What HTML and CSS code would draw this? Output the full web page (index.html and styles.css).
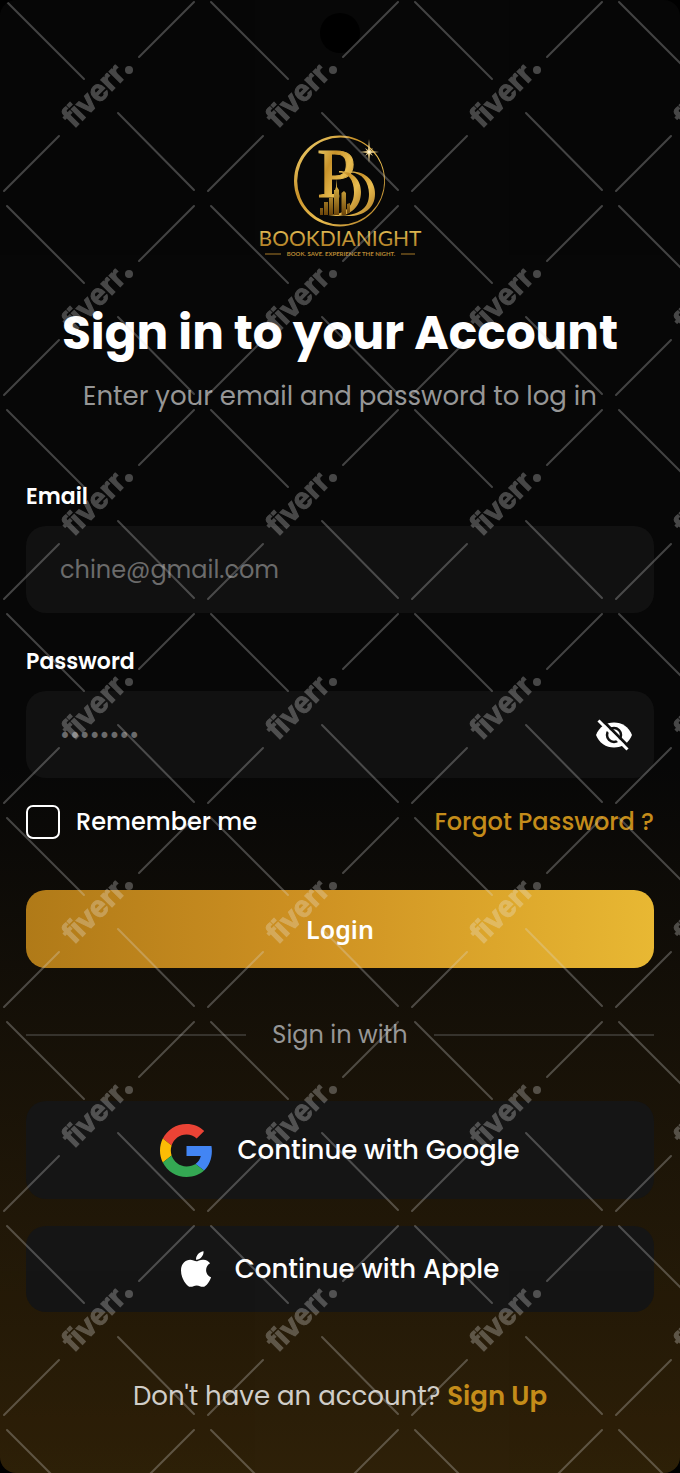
FILE: index.html
```html
<!DOCTYPE html>
<html lang="en">
<head>
    <meta charset="UTF-8">
    <meta name="viewport" content="width=device-width, initial-scale=1.0">
    <title>Bookdianight - Sign in</title>
    <link rel="stylesheet" href="styles.css">
</head>
<body>
    <main class="screen">
        <div class="camera"></div>

        <svg class="logo" viewBox="255 130 170 132" role="img" aria-label="Bookdianight">
            <defs>
                <linearGradient id="gold" x1="0" y1="0" x2="1" y2="1">
                    <stop offset="0" stop-color="#f7dc7c"/>
                    <stop offset="0.35" stop-color="#c8922a"/>
                    <stop offset="0.6" stop-color="#e9bd50"/>
                    <stop offset="1" stop-color="#a87420"/>
                </linearGradient>
                <linearGradient id="goldDown" x1="0" y1="0" x2="0" y2="1">
                    <stop offset="0" stop-color="#f0cd63"/>
                    <stop offset="1" stop-color="#a8741c"/>
                </linearGradient>
                <linearGradient id="tower" x1="0" y1="0" x2="0" y2="1">
                    <stop offset="0" stop-color="#f3c94f"/>
                    <stop offset="1" stop-color="#6b4409"/>
                </linearGradient>
            </defs>
            <!-- ring, thicker on the left -->
            <path fill="url(#gold)" fill-rule="evenodd" d="M294 181A45.500 45.500 0 1 1 385 181A45.500 45.500 0 1 1 294 181ZM297.200 181A43.500 43.500 0 1 0 384.200 181A43.500 43.500 0 1 0 297.200 181Z"/>
            <!-- monogram -->
            <text class="logo-letter" x="317" y="197">P</text>
            <path fill="url(#gold)" d="M339 171C353 171 361 180 361 192C361 206 351 216 336 216L328 215C346 215 354 205 354 192C354 180 348 172.500 339 172.500Z"/>
            <path fill="url(#gold)" d="M351 171.500C367 171.500 375 182 375 194C375 208 364 216 349 216H338C360 215.500 369 208 369 194C369 182 362 173 351 172.500Z"/>
            <!-- skyline -->
            <path fill="url(#tower)" d="M320 215V208H323V215ZM324 215V202H328V215ZM329 215V198L333 197V215ZM334 215V190H335L336 187L336.500 179L337 187L339 190V215ZM341.500 215V193L344 191L346 193V215ZM347 215V204L350 203V212L346 215Z"/>
            <!-- star -->
            <path fill="#e3c988" d="M369 139L370 150L373 148L371 151L379 152L371 153L373 156L370 154L369 163L368 154L365 156L367 153L360 152L367 151L365 148L368 150Z"/>
            <circle cx="369" cy="152" r="1.500" fill="#fff3cf"/>
            <text class="logo-name" x="340" y="246" text-anchor="middle">BOOKDIANIGHT</text>
            <text class="logo-tagline" x="341" y="256" text-anchor="middle">BOOK. SAVE. EXPERIENCE THE NIGHT.</text>
            <path stroke="#a87a28" stroke-width="1" d="M265 254H281M401 254H415"/>
        </svg>

        <h1 class="title">Sign in to your Account</h1>
        <p class="subtitle">Enter your email and password to log in</p>

        <form class="login-form">
            <div class="field">
                <label class="label" for="email">Email</label>
                <input class="input" id="email" type="email" placeholder="chine@gmail.com">
            </div>

            <div class="field">
                <label class="label" for="password">Password</label>
                <div class="password-box">
                    <input class="input" id="password" type="password" placeholder="••••••••">
                    <button class="eye-btn" type="button" aria-label="Show password">
                        <svg viewBox="0 0 40 36" width="40" height="36">
                            <path fill="#fff" d="M2 18C5 10 12 5.500 20 5.500S35 10 38 18C35 26 28 30.500 20 30.500S5 26 2 18Z"/>
                            <circle cx="20" cy="18" r="7" fill="none" stroke="#111" stroke-width="2.500"/>
                            <path stroke="#111" stroke-width="3" d="M6 1L36 31"/>
                            <path stroke="#fff" stroke-width="3" d="M4.500 3.500L33.500 32.500"/>
                        </svg>
                    </button>
                </div>
            </div>

            <div class="options">
                <label class="remember">
                    <input class="checkbox" type="checkbox">
                    Remember me
                </label>
                <a class="gold-link" href="#">Forgot Password ?</a>
            </div>

            <button class="login-btn" type="submit">Login</button>
        </form>

        <div class="divider">Sign in with</div>

        <div class="social">
            <button class="social-btn social-google" type="button">
                <svg viewBox="0 0 48 48" width="53" height="53">
                    <path fill="#EA4335" d="M24 9.500c3.540 0 6.710 1.220 9.210 3.600l6.850-6.850C35.900 2.380 30.470 0 24 0 14.620 0 6.510 5.380 2.560 13.220l7.980 6.190C12.430 13.720 17.740 9.500 24 9.500z"/>
                    <path fill="#4285F4" d="M46.980 24.550c0-1.570-.15-3.090-.38-4.550H24v9.020h12.940c-.58 2.960-2.260 5.480-4.780 7.180l7.730 6c4.510-4.180 7.090-10.360 7.090-17.650z"/>
                    <path fill="#FBBC05" d="M10.530 28.590c-.48-1.450-.76-2.990-.76-4.590s.27-3.140.76-4.590l-7.980-6.190C.92 16.460 0 20.120 0 24c0 3.880.92 7.540 2.560 10.780l7.970-6.190z"/>
                    <path fill="#34A853" d="M24 48c6.480 0 11.930-2.130 15.890-5.810l-7.730-6c-2.150 1.450-4.920 2.300-8.160 2.300-6.260 0-11.570-4.220-13.470-9.910l-7.980 6.190C6.510 42.620 14.620 48 24 48z"/>
                </svg>
                Continue with Google
            </button>
            <button class="social-btn" type="button">
                <svg viewBox="4 32 376 448" width="30" height="36">
                    <path fill="#fff" d="M318.700 268.700c-.2-36.700 16.400-64.400 50-84.800-18.800-26.900-47.200-41.700-84.700-44.600-35.500-2.800-74.300 20.700-88.500 20.700-15 0-49.400-19.700-76.400-19.700C63.300 141.200 4 184.800 4 273.500q0 39.300 14.400 81.200c12.800 36.700 59 126.700 107.200 125.200 25.200-.6 43-17.900 75.800-17.900 31.800 0 48.300 17.900 76.400 17.900 48.600-.7 90.400-82.500 102.600-119.300-65.200-30.700-61.700-90-61.700-91.900zm-56.600-164.200c27.300-32.400 24.800-61.900 24-72.500-24.100 1.400-52 16.400-67.900 34.900-17.500 19.800-27.800 44.300-25.600 71.900 26.100 2 49.900-11.400 69.500-34.300z"/>
                </svg>
                Continue with Apple
            </button>
        </div>

        <p class="signup">Don't have an account? <a class="gold-link" href="#">Sign Up</a></p>

        <svg class="watermark" width="100%" height="100%" aria-hidden="true">
            <defs>
                <pattern id="mark" width="204" height="204" patternUnits="userSpaceOnUse">
                    <path class="mark-line" d="M7 2L84 79M118 113L194 190M194 2L139 57M59 136L4 191"/>
                    <text class="mark-text" transform="translate(74 129) rotate(-45)">fiverr</text>
                    <circle class="mark-dot" cx="129" cy="70" r="4"/>
                </pattern>
            </defs>
            <rect width="100%" height="100%" fill="url(#mark)"/>
        </svg>
    </main>
</body>
</html>
```
FILE: styles.css
```css
* {
    box-sizing: border-box;
}

body {
    margin: 0;
    background: #000;
    color: #fff;
    font-family: "Poppins", "Inter", sans-serif;
}

.screen {
    position: relative;
    display: flex;
    flex-direction: column;
    min-height: 100vh;
    padding: 130px 26px 56px;
    background: linear-gradient(#070707 52%, #2e2008);
    border-radius: 16px;
    overflow: hidden;
}

.camera {
    position: absolute;
    top: 13px;
    left: 50%;
    width: 40px;
    height: 40px;
    margin-left: -20px;
    background: #000;
    border-radius: 50%;
}

.logo {
    align-self: center;
    width: 170px;
    height: 132px;
}

.logo-letter {
    fill: url(#gold);
    stroke: url(#gold);
    stroke-width: 1;
    font: 70px "Liberation Serif", serif;
}

.logo-name {
    fill: url(#goldDown);
    font: 21px "Lato", sans-serif;
}

.logo-tagline {
    fill: #b98a34;
    font: bold 6px "Lato", sans-serif;
}

.title {
    margin: 39px 0 0;
    font-size: 47px;
    line-height: 64px;
    font-weight: 700;
    text-align: center;
}

.subtitle {
    margin: 11px 0 0;
    color: #969696;
    font-size: 26px;
    line-height: 40px;
    text-align: center;
}

.login-form {
    display: flex;
    flex-direction: column;
    margin-top: 65px;
}

.field {
    display: flex;
    flex-direction: column;
    gap: 13px;
    margin-bottom: 33px;
}

.label {
    font-size: 22px;
    line-height: 32px;
    font-weight: 600;
}

.input {
    width: 100%;
    height: 87px;
    padding: 0 34px;
    background: #111;
    border: none;
    border-radius: 20px;
    color: #fff;
    font-family: inherit;
    font-size: 24px;
}

.input::placeholder {
    color: #6b6b6b;
    opacity: 1;
}

.password-box {
    position: relative;
}

.eye-btn {
    position: absolute;
    top: 0;
    right: 20px;
    display: flex;
    align-items: center;
    height: 100%;
    padding: 0;
    background: none;
    border: none;
}

.options {
    display: flex;
    align-items: center;
    justify-content: space-between;
    margin-top: -7px;
    font-size: 24px;
    line-height: 36px;
    font-weight: 500;
}

.remember {
    display: flex;
    align-items: center;
    gap: 16px;
}

.checkbox {
    appearance: none;
    width: 34px;
    height: 34px;
    margin: 0;
    border: 2px solid #fff;
    border-radius: 7px;
}

.gold-link {
    color: #c48c1a;
    text-decoration: none;
}

.login-btn {
    height: 78px;
    margin-top: 50px;
    background: linear-gradient(90deg, #b07a18, #ce9122 45%, #e8b833);
    border: none;
    border-radius: 20px;
    color: #fff;
    font: 600 25px "Noto Sans", sans-serif;
}

.divider {
    display: flex;
    align-items: center;
    gap: 26px;
    margin-top: 47px;
    color: #969696;
    font-size: 24px;
    line-height: 40px;
}

.divider::before,
.divider::after {
    content: "";
    flex: 1;
    height: 2px;
    background: #36332d;
}

.social {
    display: flex;
    flex-direction: column;
    gap: 27px;
    margin-top: 46px;
}

.social-btn {
    display: flex;
    align-items: center;
    justify-content: center;
    gap: 24px;
    height: 86px;
    padding: 0;
    background: #151515;
    border: none;
    border-radius: 20px;
    color: #fff;
    font-family: inherit;
    font-size: 26px;
    font-weight: 500;
}

.social-google {
    height: 98px;
}

.signup {
    margin: 64px 0 0;
    color: #d0cdc8;
    font-size: 26px;
    line-height: 40px;
    text-align: center;
}

.signup .gold-link {
    font-weight: 600;
}

.watermark {
    position: absolute;
    inset: 0;
    pointer-events: none;
    opacity: 0.28;
}

.mark-line {
    fill: none;
    stroke: #ddd;
    stroke-width: 2;
    stroke-linecap: round;
}

.mark-text {
    fill: #eee;
    stroke: #eee;
    stroke-width: 1;
    font: bold 30px "Liberation Sans", sans-serif;
}

.mark-dot {
    fill: #eee;
}
```
